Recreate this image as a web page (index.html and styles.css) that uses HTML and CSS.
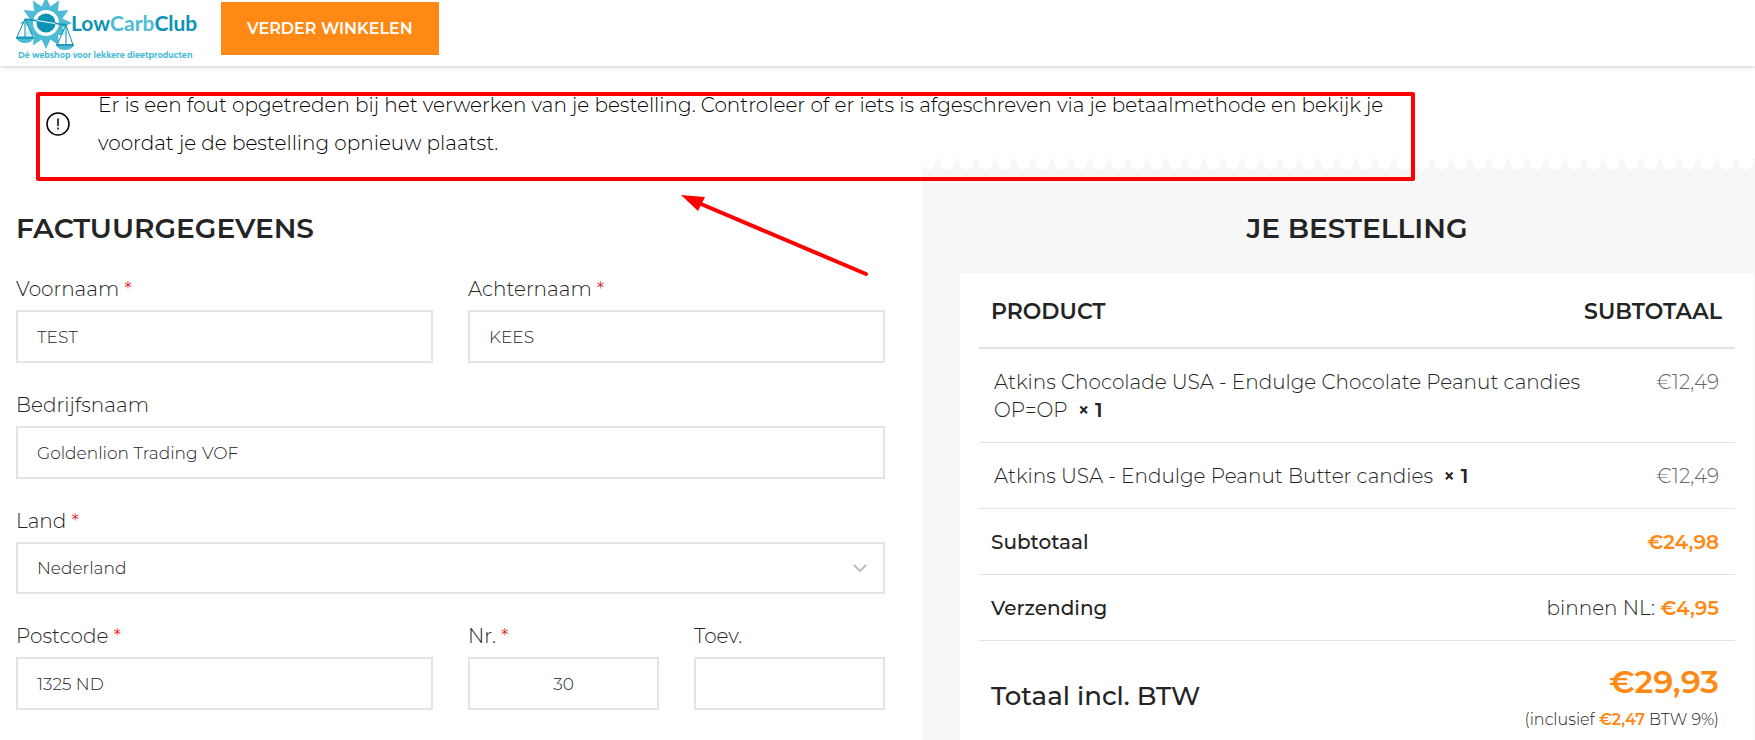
FILE: index.html
```html
<!DOCTYPE html>
<html lang="nl">
<head>
  <meta charset="UTF-8">
  <meta name="viewport" content="width=device-width, initial-scale=1">
  <title>Afrekenen - LowCarbClub</title>
  <link rel="stylesheet" href="styles.css">
</head>
<body>
  <header class="header">
    <a href="#" class="logo" aria-label="LowCarbClub">
      <svg width="182" height="62" viewBox="0 0 182 62">
        <path fill="#4dbbd6" d="M30 -3 34.4 6.6 43 .5 42 11 52.5 10 46.4 18.6 56 23 46.4 27.4 52.5 36 42 35 43 45.5 34.4 39.4 30 49 25.6 39.4 17 45.5 18 35 7.5 36 13.6 27.4 4 23 13.6 18.6 7.5 10 18 11 17 .5 25.6 6.6z"/>
        <circle cx="30" cy="23" r="13" fill="#fff"/>
        <circle cx="30" cy="23" r="9.5" fill="#0c93b3"/>
        <path d="M9 19 50 25" stroke="#0c93b3" stroke-width="1.5"/>
        <path d="M21 20.5 39 23.5" stroke="#fff" stroke-width="1.2"/>
        <path d="M1 37 9 19 17 37zM41 45 50 25 57 45z" fill="#fff" fill-opacity=".75" stroke="#0c93b3"/>
        <path d="M9 19V37M50 25V45" stroke="#0c93b3"/>
        <path fill="#4dbbd6" d="M0 37H18Q16 43 9 43Q2 43 0 37zM40 45H58Q56 50 49 50Q42 50 40 45z"/>
        <path fill="none" stroke="#0c93b3" stroke-width="1.5" d="M0 38H18M40 45H58"/>
        <text class="logo-name" x="55" y="31"><tspan class="logo-low">Low</tspan><tspan class="logo-carb">Carb</tspan><tspan class="logo-club">Club</tspan></text>
        <text class="logo-tag" x="2" y="58">Dé webshop voor lekkere dieetproducten</text>
      </svg>
    </a>
    <button type="button" class="btn">Verder winkelen</button>
  </header>

  <div class="notice" role="alert">
    <svg class="notice-icon" width="24" height="24" viewBox="0 0 24 24">
      <circle cx="12" cy="12" r="11" fill="none" stroke="#000" stroke-width="1.5"/>
      <path d="M12 6.5v7.5M12 15.5v2" stroke="#000" stroke-width="1.5"/>
    </svg>
    <p>Er is een fout opgetreden bij het verwerken van je bestelling. Controleer of er iets is afgeschreven via je betaalmethode en bekijk je<br>voordat je de bestelling opnieuw plaatst.</p>
    <svg class="arrow" width="190" height="84" viewBox="0 0 190 84">
      <path d="M20 10 185 80" stroke="#f00" stroke-width="4" stroke-linecap="round"/>
      <path d="M0 1 24 3 17 17z" fill="#f00"/>
    </svg>
  </div>

  <main class="checkout">
    <form class="billing">
      <h2>Factuurgegevens</h2>
      <div class="fields">
        <div class="field half">
          <label for="voornaam">Voornaam <span class="required">*</span></label>
          <input type="text" id="voornaam" value="TEST">
        </div>
        <div class="field half">
          <label for="achternaam">Achternaam <span class="required">*</span></label>
          <input type="text" id="achternaam" value="KEES">
        </div>
        <div class="field">
          <label for="bedrijf">Bedrijfsnaam</label>
          <input type="text" id="bedrijf" value="Goldenlion Trading VOF">
        </div>
        <div class="field">
          <label for="land">Land <span class="required">*</span></label>
          <div class="select">
            <select id="land">
              <option>Nederland</option>
            </select>
            <svg width="14" height="8" viewBox="0 0 14 8">
              <path d="M1 1 7 7 13 1" fill="none" stroke="#bbb" stroke-width="2"/>
            </svg>
          </div>
        </div>
        <div class="field half">
          <label for="postcode">Postcode <span class="required">*</span></label>
          <input type="text" id="postcode" value="1325 ND">
        </div>
        <div class="field quarter">
          <label for="nr">Nr. <span class="required">*</span></label>
          <input type="text" id="nr" class="center" value="30">
        </div>
        <div class="field quarter">
          <label for="toev">Toev.</label>
          <input type="text" id="toev">
        </div>
      </div>
    </form>

    <section class="order">
      <h2>Je bestelling</h2>
      <div class="order-box">
        <table>
          <colgroup>
            <col class="col-name">
            <col>
            <col class="col-price">
          </colgroup>
          <thead>
            <tr><th>Product</th><th colspan="2">Subtotaal</th></tr>
          </thead>
          <tbody>
            <tr>
              <td colspan="2">Atkins Chocolade USA - Endulge Chocolate Peanut candies OP=OP&nbsp; <strong>× 1</strong></td>
              <td class="price">€12,49</td>
            </tr>
            <tr>
              <td colspan="2">Atkins USA - Endulge Peanut Butter candies&nbsp; <strong>× 1</strong></td>
              <td class="price">€12,49</td>
            </tr>
          </tbody>
          <tfoot>
            <tr>
              <th>Subtotaal</th>
              <td colspan="2"><span class="amount">€24,98</span></td>
            </tr>
            <tr>
              <th>Verzending</th>
              <td colspan="2">binnen NL: <span class="amount">€4,95</span></td>
            </tr>
            <tr class="total">
              <th>Totaal incl. BTW</th>
              <td colspan="2"><span class="amount">€29,93</span><small>(inclusief <span class="amount">€2,47</span> BTW 9%)</small></td>
            </tr>
          </tfoot>
        </table>
      </div>
    </section>
  </main>
</body>
</html>
```

FILE: styles.css
```css
* {
  box-sizing: border-box;
}
body {
  margin: 0;
  min-height: 100vh;
  display: flex;
  flex-direction: column;
  font-family: Montserrat, Inter, sans-serif;
  font-size: 20px;
  font-weight: 300;
  line-height: 28px;
  color: #242424;
  background: #fff;
}
h2 {
  margin: 0;
  font-size: 28px;
  font-weight: 600;
  line-height: 36px;
  text-transform: uppercase;
}

/* header */
.header {
  display: flex;
  align-items: flex-start;
  gap: 23px;
  height: 66px;
  padding-left: 16px;
  box-shadow: 0 1px 4px rgba(0,0,0,0.2);
}
.logo svg {
  display: block;
  overflow: visible;
}
.logo-name {
  font-family: Lato, sans-serif;
  font-size: 21px;
  font-weight: 700;
}
.logo-low, .logo-club {
  fill: #0c93b3;
}
.logo-carb {
  fill: #4dbbd6;
}
.logo-tag {
  font-size: 8px;
  font-weight: 700;
  fill: #4dbbd6;
}
.btn {
  margin-top: 2px;
  padding: 0 26px;
  height: 53px;
  border: none;
  background: #ff8914;
  color: #fff;
  font-family: inherit;
  font-size: 16px;
  font-weight: 600;
  text-transform: uppercase;
  cursor: pointer;
}

/* error message */
.notice {
  position: relative;
  z-index: 1;
  display: flex;
  align-items: center;
  gap: 28px;
  width: 78.6%;
  margin: 20px 0 0 36px;
  padding-left: 10px;
  line-height: 38px;
  color: #000;
}
.notice p {
  margin: 0;
  white-space: nowrap;
}
.notice::after {
  content: "";
  position: absolute;
  inset: 6px 0 -19px 0;
  border: 4px solid #f00;
  border-radius: 2px;
}
.notice-icon {
  flex: none;
}
.arrow {
  position: absolute;
  top: 108px;
  left: 645px;
}

/* columns */
.checkout {
  flex: 1;
  display: grid;
  grid-template-columns: 922fr 833fr;
  margin-top: -3px;
}
.billing {
  padding: 51px 37px 0 16px;
}
.fields {
  display: grid;
  grid-template-columns: repeat(4, 1fr);
  gap: 28px 35px;
  margin-top: 29px;
}
.field {
  grid-column: span 4;
}
.half {
  grid-column: span 2;
}
.quarter {
  grid-column: span 1;
}
.field label {
  display: block;
  margin-bottom: 6px;
  line-height: 29px;
}
.required {
  color: #e01020;
}
input, select {
  display: block;
  width: 100%;
  height: 53px;
  padding: 0 19px;
  border: 2px solid #e4e4e4;
  border-radius: 0;
  background: #fff;
  color: #242424;
  font-family: inherit;
  font-size: 17px;
  font-weight: 300;
  appearance: none;
}
select {
  height: 52px;
}
.center {
  text-align: center;
}
.select {
  position: relative;
}
.select svg {
  position: absolute;
  top: 22px;
  right: 18px;
}

/* order summary */
.order {
  padding: 51px 1px 0 38px;
  background:
    radial-gradient(ellipse 8px 11px at 50% 0, #fff 95%, transparent) -3px 0 / 19px 11px repeat-x,
    #f7f7f7;
  display: flex;
  flex-direction: column;
}
.order h2 {
  text-align: center;
}
.order-box {
  flex: 1;
  margin-top: 27px;
  padding: 0 19px;
  background: #fff;
}
table {
  width: 100%;
  table-layout: fixed;
  border-collapse: collapse;
}
.col-name {
  width: 60%;
}
.col-price {
  width: 15%;
}
th, td {
  padding: 19px 16px 18px 15px;
  border-bottom: 1px solid #e2e2e2;
  text-align: left;
  vertical-align: top;
}
th {
  padding-left: 12px;
  font-weight: 500;
}
th:last-child, td:last-child {
  text-align: right;
}
thead th {
  padding: 25px 13px 21px 12px;
  border-bottom-width: 2px;
  font-size: 22px;
  font-weight: 600;
  text-transform: uppercase;
}
strong {
  font-weight: 600;
}
.price {
  color: #666;
}
.amount {
  color: #ff8914;
  font-weight: 600;
}
.total th {
  padding: 41px 0 0 12px;
  font-size: 26px;
}
.total td {
  padding: 22px 16px 0;
}
.total th, .total td {
  border-bottom: none;
}
.total td > .amount {
  display: block;
  font-size: 32px;
  line-height: 38px;
}
small {
  display: block;
  font-size: 16px;
  line-height: 38px;
}
```
